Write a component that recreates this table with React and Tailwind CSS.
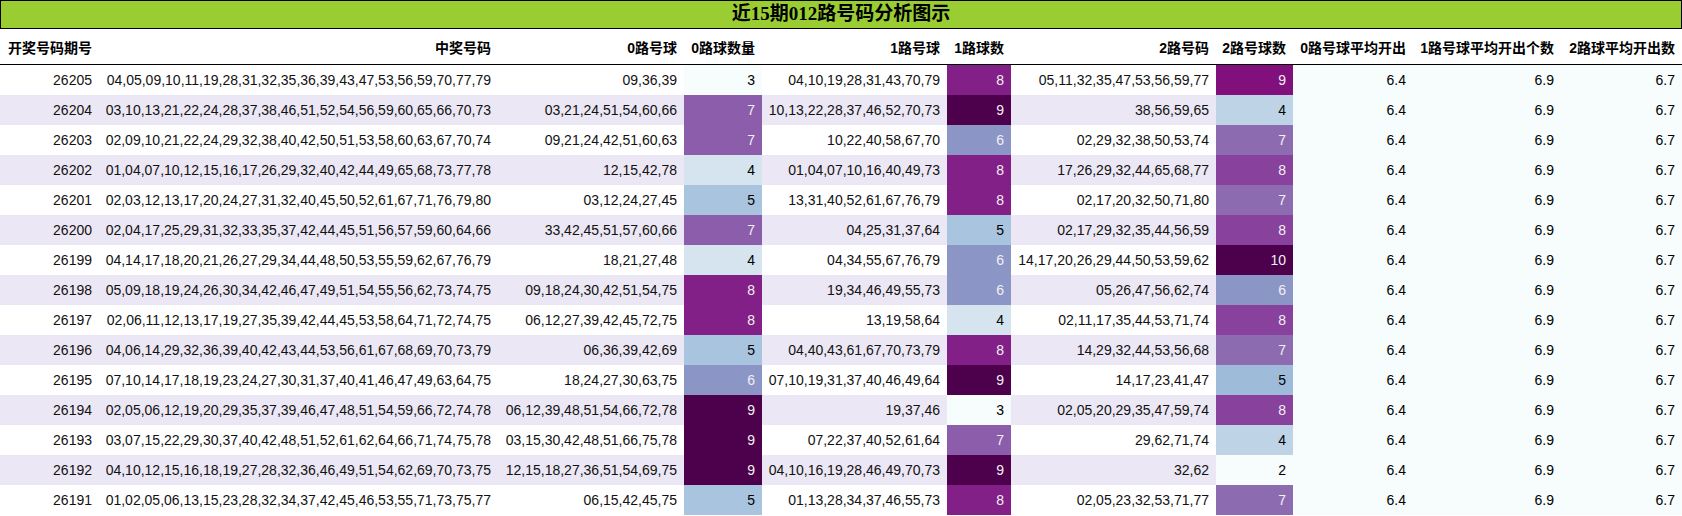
const rows = [
  ["26205", "04,05,09,10,11,19,28,31,32,35,36,39,43,47,53,56,59,70,77,79", "09,36,39", 3, "04,10,19,28,31,43,70,79", 8, "05,11,32,35,47,53,56,59,77", 9],
  ["26204", "03,10,13,21,22,24,28,37,38,46,51,52,54,56,59,60,65,66,70,73", "03,21,24,51,54,60,66", 7, "10,13,22,28,37,46,52,70,73", 9, "38,56,59,65", 4],
  ["26203", "02,09,10,21,22,24,29,32,38,40,42,50,51,53,58,60,63,67,70,74", "09,21,24,42,51,60,63", 7, "10,22,40,58,67,70", 6, "02,29,32,38,50,53,74", 7],
  ["26202", "01,04,07,10,12,15,16,17,26,29,32,40,42,44,49,65,68,73,77,78", "12,15,42,78", 4, "01,04,07,10,16,40,49,73", 8, "17,26,29,32,44,65,68,77", 8],
  ["26201", "02,03,12,13,17,20,24,27,31,32,40,45,50,52,61,67,71,76,79,80", "03,12,24,27,45", 5, "13,31,40,52,61,67,76,79", 8, "02,17,20,32,50,71,80", 7],
  ["26200", "02,04,17,25,29,31,32,33,35,37,42,44,45,51,56,57,59,60,64,66", "33,42,45,51,57,60,66", 7, "04,25,31,37,64", 5, "02,17,29,32,35,44,56,59", 8],
  ["26199", "04,14,17,18,20,21,26,27,29,34,44,48,50,53,55,59,62,67,76,79", "18,21,27,48", 4, "04,34,55,67,76,79", 6, "14,17,20,26,29,44,50,53,59,62", 10],
  ["26198", "05,09,18,19,24,26,30,34,42,46,47,49,51,54,55,56,62,73,74,75", "09,18,24,30,42,51,54,75", 8, "19,34,46,49,55,73", 6, "05,26,47,56,62,74", 6],
  ["26197", "02,06,11,12,13,17,19,27,35,39,42,44,45,53,58,64,71,72,74,75", "06,12,27,39,42,45,72,75", 8, "13,19,58,64", 4, "02,11,17,35,44,53,71,74", 8],
  ["26196", "04,06,14,29,32,36,39,40,42,43,44,53,56,61,67,68,69,70,73,79", "06,36,39,42,69", 5, "04,40,43,61,67,70,73,79", 8, "14,29,32,44,53,56,68", 7],
  ["26195", "07,10,14,17,18,19,23,24,27,30,31,37,40,41,46,47,49,63,64,75", "18,24,27,30,63,75", 6, "07,10,19,31,37,40,46,49,64", 9, "14,17,23,41,47", 5],
  ["26194", "02,05,06,12,19,20,29,35,37,39,46,47,48,51,54,59,66,72,74,78", "06,12,39,48,51,54,66,72,78", 9, "19,37,46", 3, "02,05,20,29,35,47,59,74", 8],
  ["26193", "03,07,15,22,29,30,37,40,42,48,51,52,61,62,64,66,71,74,75,78", "03,15,30,42,48,51,66,75,78", 9, "07,22,37,40,52,61,64", 7, "29,62,71,74", 4],
  ["26192", "04,10,12,15,16,18,19,27,28,32,36,46,49,51,54,62,69,70,73,75", "12,15,18,27,36,51,54,69,75", 9, "04,10,16,19,28,46,49,70,73", 9, "32,62", 2],
  ["26191", "01,02,05,06,13,15,23,28,32,34,37,42,45,46,53,55,71,73,75,77", "06,15,42,45,75", 5, "01,13,28,34,37,46,55,73", 8, "02,05,23,32,53,71,77", 7],
];

// BuPu shades, 0路/1路 counts run 3..9
const shade39 = {
  3: "bg-[#f7fcfd] text-black",
  4: "bg-[#d5e4ef] text-black",
  5: "bg-[#a9c4de] text-black",
  6: "bg-[#8c96c6] text-[#f1f1f1]",
  7: "bg-[#8b5daa] text-[#f1f1f1]",
  8: "bg-[#832087] text-[#f1f1f1]",
  9: "bg-[#4d004b] text-[#f1f1f1]",
};

// 2路 counts run 2..10
const shade210 = {
  2: "bg-[#f7fcfd] text-black",
  4: "bg-[#bfd3e6] text-black",
  5: "bg-[#9ebcda] text-black",
  6: "bg-[#8c96c6] text-[#f1f1f1]",
  7: "bg-[#8c6bb1] text-[#f1f1f1]",
  8: "bg-[#88419d] text-[#f1f1f1]",
  9: "bg-[#810f7c] text-[#f1f1f1]",
  10: "bg-[#4d004b] text-[#f1f1f1]",
};

const headers = [
  "开奖号码期号",
  "中奖号码",
  "0路号球",
  "0路球数量",
  "1路号球",
  "1路球数",
  "2路号码",
  "2路号球数",
  "0路号球平均开出",
  "1路号球平均开出个数",
  "2路球平均开出数",
];

const grid =
  "grid grid-cols-[99px_399px_186px_78px_185px_64px_205px_77px_120px_148px_121px]";

const Cell = ({ children, className = "" }) => (
  <div className={`flex items-center justify-end pr-[7px] whitespace-nowrap ${className}`}>
    {children}
  </div>
);

export default function App() {
  return (
    <div className="w-[1682px] bg-white text-[14px] text-[#111] font-['Liberation_Sans','Noto_Sans_CJK_SC',sans-serif]">
      <div className="h-[29px] border border-black bg-[#9acd32] flex items-center justify-center">
        <span className="text-[19px] font-bold text-black font-['Liberation_Serif','Noto_Sans_CJK_SC',serif]">
          近15期012路号码分析图示
        </span>
      </div>

      <div className={`${grid} h-[36px] border-b border-black pt-[4px] font-bold text-black`}>
        {headers.map((h) => (
          <Cell key={h}>{h}</Cell>
        ))}
      </div>

      {rows.map((r, i) => {
        const stripe = i % 2 === 1 ? "bg-[#ece7f4]" : "bg-white";
        return (
          <div key={r[0]} className={`${grid} h-[30px] ${stripe}`}>
            <Cell>{r[0]}</Cell>
            <Cell>{r[1]}</Cell>
            <Cell>{r[2]}</Cell>
            <Cell className={shade39[r[3]]}>{r[3]}</Cell>
            <Cell>{r[4]}</Cell>
            <Cell className={shade39[r[5]]}>{r[5]}</Cell>
            <Cell>{r[6]}</Cell>
            <Cell className={shade210[r[7]]}>{r[7]}</Cell>
            <Cell className="bg-[#f7fcfd] text-black">6.4</Cell>
            <Cell className="bg-[#f7fcfd] text-black">6.9</Cell>
            <Cell className="bg-[#f7fcfd] text-black">6.7</Cell>
          </div>
        );
      })}
    </div>
  );
}
